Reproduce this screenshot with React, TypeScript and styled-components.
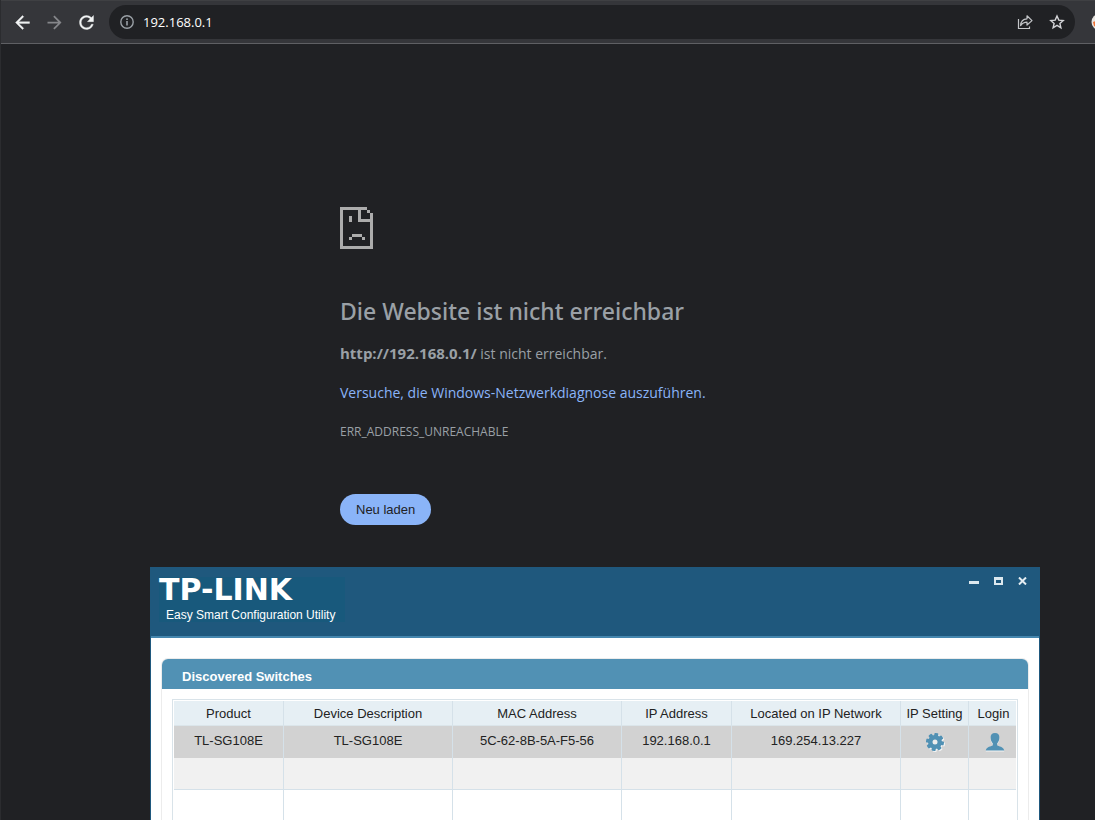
import React from "react";
import styled, { createGlobalStyle } from "styled-components";

const UI_FONT = `"Open Sans", "Noto Sans", sans-serif`;
const APP_FONT = `"Liberation Sans", Arial, sans-serif`;

const GlobalStyle = createGlobalStyle`
  *, *::before, *::after { box-sizing: border-box; }
  body { margin: 0; background: #202124; }
`;

const Browser = styled.div`
  position: relative;
  display: flex;
  flex-direction: column;
  height: 100vh;
  overflow: hidden;
  border-left: 1px solid #2b2c2f;
  background: #202124;
  font-family: ${UI_FONT};
`;

const EdgeMark = styled.span`
  position: absolute;
  left: -1px;
  top: 126px;
  width: 1px;
  height: 5px;
  border-top: 1px solid #a9b4c8;
  background: #2d2a78;
`;

const Toolbar = styled.header`
  display: flex;
  flex: none;
  align-items: center;
  height: 44px;
  padding-left: 5px;
  overflow: hidden;
  border-top: 1px solid #3f4043;
  border-bottom: 1px solid #5f6064;
  background: #35363a;
`;

const ToolButton = styled.button<{ $color?: string }>`
  display: flex;
  flex: none;
  align-items: center;
  justify-content: center;
  width: 32px;
  height: 32px;
  padding: 0;
  border: 0;
  background: none;
  color: ${(p) => p.$color ?? "#f1f3f4"};
`;

const AddressBar = styled.div`
  display: flex;
  flex: 1;
  align-items: center;
  min-width: 0;
  height: 34px;
  margin-left: 7px;
  padding: 0 2px;
  border-radius: 17px;
  background: #202124;
`;

const AddressInput = styled.input`
  flex: 1;
  min-width: 0;
  height: 32px;
  padding: 0;
  border: 0;
  outline: 0;
  background: none;
  color: #ffffff;
  font: 13px ${UI_FONT};
`;

const Extensions = styled.div`
  display: flex;
  flex: none;
  width: 20px;
  padding-left: 16px;
  overflow: hidden;
`;

const ExtensionIcon = styled.svg`
  flex: none;
`;

const ErrorPage = styled.main`
  flex: none;
  padding: 163px 40px 42px 339px;
  color: #9aa0a6;
`;

const SadPage = styled.svg`
  display: block;
  color: #acacac;
`;

const Title = styled.h1`
  margin: 46px 0 0;
  font-size: 23px;
  font-weight: 500;
  font-family: "Noto Sans", "Open Sans", sans-serif;
  line-height: 32px;
`;

const Text = styled.p`
  margin: 15px 0 0;
  font-size: 14px;
  line-height: 24px;

  strong { font-size: 15px; line-height: 20px; }
`;

const ErrorCode = styled.p`
  margin: 15px 0 0;
  font-size: 12px;
  line-height: 24px;
`;

const Link = styled.a`
  color: #8ab4f8;
  text-decoration: none;
`;

const ReloadButton = styled.button`
  display: block;
  height: 31px;
  margin-top: 50px;
  padding: 0 16px;
  border: 0;
  border-radius: 16px;
  background: #8ab4f8;
  color: #202124;
  font: 13px ${APP_FONT};
`;

const Utility = styled.section`
  flex: none;
  margin: 0 55px 0 149px;
  border: solid #1f587d;
  border-width: 0 1px;
  background: #ffffff;
  font-family: ${APP_FONT};
`;

const TitleBar = styled.header`
  display: flex;
  align-items: flex-start;
  justify-content: space-between;
  height: 71px;
  padding: 10px 5px 0 8px;
  border-bottom: 2px solid #4586ae;
  background: #1f587d;
`;

const Brand = styled.div`
  width: 186px;
  height: 45px;
  background: #18597c;
  color: #ffffff;
  white-space: nowrap;
`;

const Logo = styled.div`
  height: 28px;
  font: bold 30px/26px "DejaVu Sans", sans-serif;
`;

const Tagline = styled.div`
  padding-left: 7px;
  font-size: 12px;
  line-height: 20px;
`;

const WindowControls = styled.div`
  display: flex;
`;

const WindowButton = styled.button`
  display: flex;
  align-items: center;
  justify-content: center;
  width: 24px;
  height: 8px;
  padding: 0;
  border: 0;
  background: none;
`;

const Panel = styled.section`
  margin: 20px 10px 0;
  border: solid #ececec;
  border-width: 1px 1px 0;
  border-radius: 7px 7px 0 0;
`;

const PanelTitle = styled.h2`
  height: 30px;
  margin: 0;
  padding: 2px 20px 0;
  border-radius: 6px 6px 0 0;
  background: #5191b4;
  color: #ffffff;
  font-size: 13px;
  line-height: 32px;
`;

const TableFrame = styled.div`
  margin: 10px 10px 0;
  padding: 1px 1px 0;
  border: solid #d9e3e9;
  border-width: 1px 1px 0;
`;

const Table = styled.table`
  width: 100%;
  table-layout: fixed;
  border-collapse: separate;
  border-spacing: 0;
  color: #222222;
  font-size: 13px;
  white-space: nowrap;
`;

const HeadCell = styled.th<{ $width: number }>`
  width: ${(p) => p.$width}px;
  height: 25px;
  padding: 0;
  border-right: 1px solid #d5e1e9;
  border-bottom: 1px solid #dbe5ea;
  background: #e6eff4;
  font-weight: normal;

  &:last-child { padding-left: 2px; border-right: 0; }
`;

const rowColors = { selected: "#d2d2d2", odd: "#f1f1f1", even: "#ffffff" };

const Row = styled.tr<{ $kind: keyof typeof rowColors }>`
  background: ${(p) => rowColors[p.$kind]};

  td {
    height: 32px;
    padding: 0 0 3px;
    border-right: 1px solid #d5e1e9;
    border-bottom: ${(p) => (p.$kind === "selected" ? "0" : "1px solid #d5e1e9")};
    text-align: center;
  }

  td:last-child { padding-left: 4px; border-right: 0; }
`;

const CellButton = styled.button`
  display: block;
  width: 20px;
  height: 20px;
  margin: 4px auto 0;
  padding: 0;
  border: 0;
  background: none;
`;

const columns = [
  { label: "Product", width: 110 },
  { label: "Device Description", width: 169 },
  { label: "MAC Address", width: 169 },
  { label: "IP Address", width: 110 },
  { label: "Located on IP Network", width: 169 },
  { label: "IP Setting", width: 68 },
  { label: "Login", width: 47 },
];

const device = ["TL-SG108E", "TL-SG108E", "5C-62-8B-5A-F5-56", "192.168.0.1", "169.254.13.227"];

const ARROW = "M20 11H7.83l5.59-5.59L12 4l-8 8 8 8 1.41-1.41L7.83 13H20v-2z";
const RELOAD =
  "M17.65 6.35A7.958 7.958 0 0 0 12 4c-4.42 0-7.99 3.58-7.99 8s3.57 8 7.99 8c3.73 0 6.84-2.55 7.73-6h-2.08A5.99 5.99 0 0 1 12 18c-3.31 0-6-2.69-6-6s2.69-6 6-6c1.66 0 3.14.69 4.22 1.78L13 11h7V4l-2.35 2.35z";

function GearShape({ fill, hole }: { fill: string; hole: string }) {
  return (
    <g fill={fill}>
      {[0, 45, 90, 135].map((a) => (
        <rect key={a} x="8" y="0" width="4" height="18" rx="1" transform={`rotate(${a + 10} 10 9)`} />
      ))}
      <circle cx="10" cy="9" r="7" />
      <circle cx="10" cy="9" r="2.5" fill={hole} />
    </g>
  );
}

const PERSON =
  "M10 0C7 0 5.4 2 5.6 4.8C5.7 7.4 6.6 9.2 7.8 10.4V12.2C6.6 13.4 1.2 13.4 0.8 17.6H19.2C18.8 13.4 13.4 13.4 12.2 12.2V10.4C13.4 9.2 14.3 7.4 14.4 4.8C14.6 2 13 0 10 0Z";

export default function App() {
  return (
    <Browser>
      <GlobalStyle />
      <EdgeMark />
      <Toolbar>
        <ToolButton aria-label="Zurück">
          <svg width="21" height="21" viewBox="0 0 24 24" fill="currentColor" stroke="currentColor" strokeWidth="0.4"><path d={ARROW} /></svg>
        </ToolButton>
        <ToolButton aria-label="Vorwärts" $color="#85868a">
          <svg width="21" height="21" viewBox="0 0 24 24" fill="currentColor"><path d={ARROW} transform="rotate(180 12 12)" /></svg>
        </ToolButton>
        <ToolButton aria-label="Neu laden">
          <svg width="21" height="21" viewBox="0 0 24 24" fill="currentColor" stroke="currentColor" strokeWidth="0.4"><path d={RELOAD} /></svg>
        </ToolButton>
        <AddressBar>
          <ToolButton aria-label="Websiteinformationen" $color="#9aa0a6">
            <svg width="14" height="14" viewBox="0 0 14 14" fill="currentColor">
              <circle cx="7" cy="7" r="6.2" fill="none" stroke="currentColor" strokeWidth="1.4" />
              <rect x="6.2" y="6" width="1.6" height="4.5" />
              <rect x="6.2" y="3.4" width="1.6" height="1.6" />
            </svg>
          </ToolButton>
          <AddressInput aria-label="Adresse" defaultValue="192.168.0.1" />
          <ToolButton aria-label="Teilen" $color="#c4c6c9">
            <svg width="16" height="16" viewBox="0 0 16 16" fill="none" stroke="currentColor" strokeWidth="1.2">
              <path d="M1.5 5V14.5H12.5V12.5" />
              <path d="M3.6 11.6C3.8 7.6 6.2 5 10 4.8V1.8L15 6.6L10 11V8.2C7.2 8.2 5.2 9.4 3.6 11.6Z" strokeLinejoin="round" />
            </svg>
          </ToolButton>
          <ToolButton aria-label="Lesezeichen" $color="#d4d5d8">
            <svg width="16" height="16" viewBox="0 0 16 16" fill="none" stroke="currentColor" strokeWidth="1.4">
              <path d="M8 2L9.8 6.1L14.2 6.5L10.9 9.4L11.9 13.8L8 11.4L4.1 13.8L5.1 9.4L1.8 6.5L6.2 6.1Z" />
            </svg>
          </ToolButton>
        </AddressBar>
        <Extensions>
          <ExtensionIcon width="16" height="16" viewBox="0 0 16 16">
            <circle cx="8.5" cy="8" r="8" fill="#e8e4df" />
            <path d="M2 8L8 6V14L3 12Z" fill="#ee7236" />
          </ExtensionIcon>
        </Extensions>
      </Toolbar>

      <ErrorPage>
        <SadPage width="33" height="42" viewBox="0 0 11 14" fill="currentColor" shapeRendering="crispEdges">
          <path d="M0 0H9V1H7V4H10V2H11V14H0ZM1 1V13H10V5H6V1Z" fillRule="evenodd" />
          <path d="M9 1H10V2H9ZM3 3H4V5H3ZM4 9H7.4V10H4ZM3 10H4V11H3ZM7.4 10H8.4V11H7.4Z" />
        </SadPage>
        <Title>Die Website ist nicht erreichbar</Title>
        <Text><strong>http://192.168.0.1/</strong> ist nicht erreichbar.</Text>
        <Text><Link href="#diagnose">Versuche, die Windows-Netzwerkdiagnose auszuführen.</Link></Text>
        <ErrorCode>ERR_ADDRESS_UNREACHABLE</ErrorCode>
        <ReloadButton>Neu laden</ReloadButton>
      </ErrorPage>

      <Utility>
        <TitleBar>
          <Brand>
            <Logo>TP-LINK</Logo>
            <Tagline>Easy Smart Configuration Utility</Tagline>
          </Brand>
          <WindowControls>
            <WindowButton aria-label="Minimize">
              <svg width="10" height="8" viewBox="0 0 10 8"><path d="M0 4H10V7H0Z" fill="#dce8ee" /></svg>
            </WindowButton>
            <WindowButton aria-label="Maximize">
              <svg width="9" height="8" viewBox="0 0 9 8"><path d="M0 0H9V8H0ZM2 3V6H7V3Z" fill="#dce8ee" fillRule="evenodd" /></svg>
            </WindowButton>
            <WindowButton aria-label="Close">
              <svg width="9" height="8" viewBox="0 0 9 8"><path d="M1 0.5L8 7.5M8 0.5L1 7.5" stroke="#e4edf2" strokeWidth="2" /></svg>
            </WindowButton>
          </WindowControls>
        </TitleBar>
        <Panel>
          <PanelTitle>Discovered Switches</PanelTitle>
          <TableFrame>
            <Table>
              <thead>
                <tr>
                  {columns.map((c) => (
                    <HeadCell key={c.label} $width={c.width} scope="col">{c.label}</HeadCell>
                  ))}
                </tr>
              </thead>
              <tbody>
                <Row $kind="selected">
                  {device.map((value, i) => <td key={i}>{value}</td>)}
                  <td>
                    <CellButton aria-label="IP Setting">
                      <svg width="20" height="20" viewBox="0 0 20 20">
                        <g transform="translate(1 1)"><GearShape fill="#f4f4f4" hole="#f4f4f4" /></g>
                        <GearShape fill="#5191b4" hole="#ececec" />
                      </svg>
                    </CellButton>
                  </td>
                  <td>
                    <CellButton aria-label="Login">
                      <svg width="20" height="20" viewBox="0 0 20 20">
                        <path d={PERSON} fill="#f4f4f4" transform="translate(0 1)" />
                        <path d={PERSON} fill="#5191b4" />
                      </svg>
                    </CellButton>
                  </td>
                </Row>
                <Row $kind="odd">{columns.map((c) => <td key={c.label} />)}</Row>
                <Row $kind="even">{columns.map((c) => <td key={c.label} />)}</Row>
                <Row $kind="odd">{columns.map((c) => <td key={c.label} />)}</Row>
              </tbody>
            </Table>
          </TableFrame>
        </Panel>
      </Utility>
    </Browser>
  );
}
